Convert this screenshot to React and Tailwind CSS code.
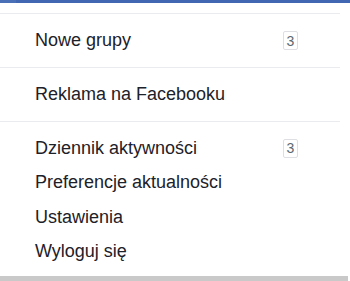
function Badge({ n }) {
  return (
    <span className="flex h-[19px] w-[15px] items-center justify-center rounded-[2px] border border-[#dddfe2] text-[14px] leading-none text-[#606770]">
      {n}
    </span>
  )
}

function Row({ label, badge }) {
  return (
    <div className="flex h-[34.5px] items-center justify-between pl-[35px] pr-[42px]">
      <span>{label}</span>
      {badge && <Badge n={badge} />}
    </div>
  )
}

export default function App() {
  return (
    <div className="h-[281px] w-[350px] overflow-hidden bg-white text-[18px] text-[#1d2129]" style={{ fontFamily: '"Liberation Sans", Arial, sans-serif' }}>
      <div className="flex h-[3px]">
        <div className="w-[16px] bg-[#4a70b8]" />
        <div className="flex-1 bg-[#4267b2]" />
      </div>
      <div className="w-[340px]">
        <div className="h-[10px]" />
        <div className="h-px bg-[#e9ebee]" />
        <div className="flex h-[53px] items-center">
          <div className="w-full">
            <Row label="Nowe grupy" badge="3" />
          </div>
        </div>
        <div className="h-px bg-[#e9ebee]" />
        <div className="flex h-[53px] items-center">
          <div className="w-full">
            <Row label="Reklama na Facebooku" />
          </div>
        </div>
        <div className="h-px bg-[#e9ebee]" />
        <div className="pt-[9px] pb-[7px]">
          <Row label="Dziennik aktywności" badge="3" />
          <Row label="Preferencje aktualności" />
          <Row label="Ustawienia" />
          <Row label="Wyloguj się" />
        </div>
      </div>
      <div className="h-[5px] w-[348px] bg-[#c9c9c9]" />
    </div>
  )
}
